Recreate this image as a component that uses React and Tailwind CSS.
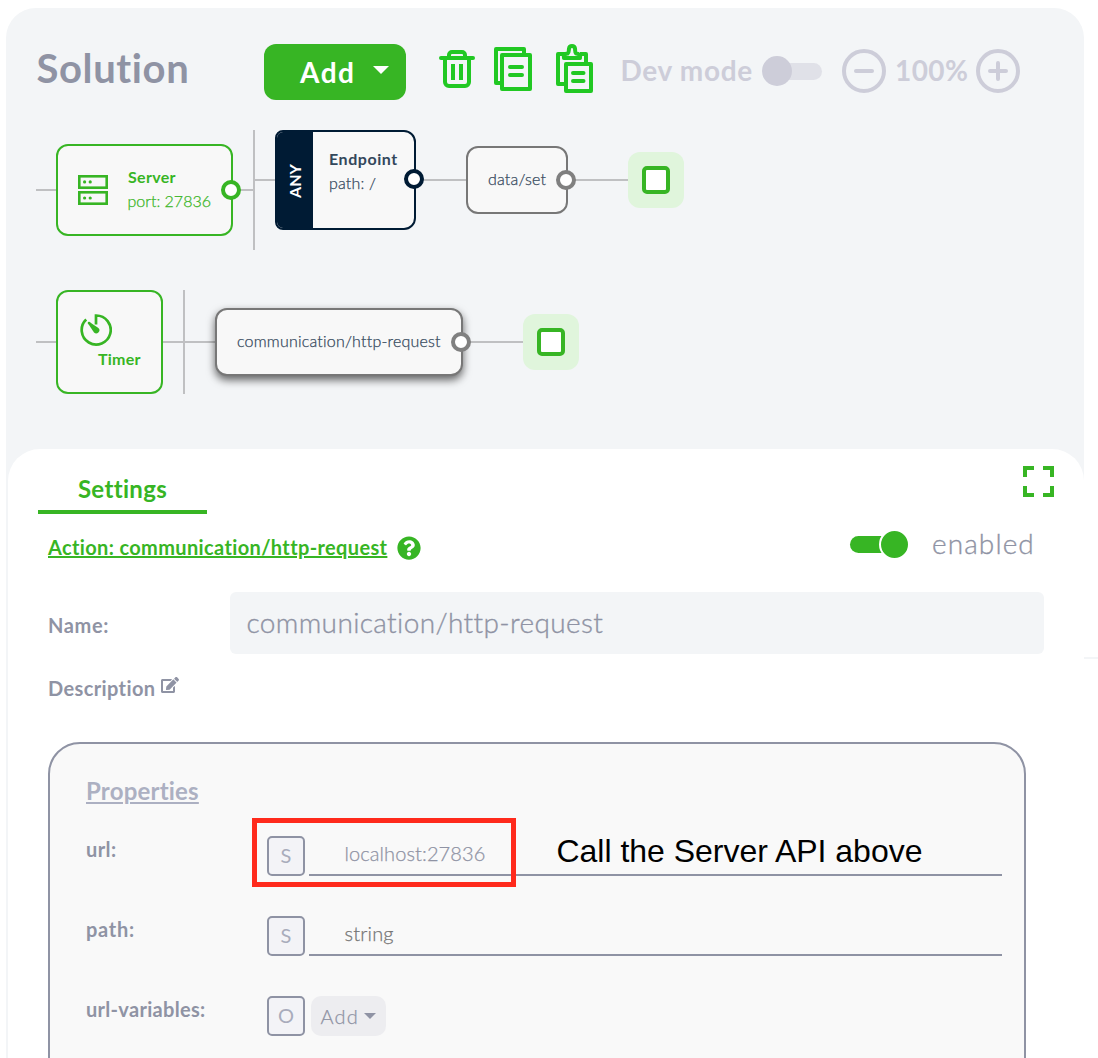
import { FaQuestionCircle, FaEdit } from "react-icons/fa";

function TrashIcon() {
  return (
    <svg className="ml-[31px] h-14 w-[40px]" viewBox="0 0 40 56" fill="none" stroke="#21c823" strokeWidth="4">
      <path d="M4 14h32" strokeLinecap="round" />
      <path d="M12 13V11a3 3 0 0 1 3-3h10a3 3 0 0 1 3 3v2" />
      <path d="M8 14v24a4 4 0 0 0 4 4h16a4 4 0 0 0 4-4V14" />
      <path d="M16 20v16M24 20v16" />
    </svg>
  );
}

function CopyIcon() {
  return (
    <svg className="ml-[16px] h-14 w-[40px]" viewBox="0 0 40 56" fill="none" stroke="#21c823" strokeWidth="4" strokeLinejoin="round">
      <path d="M31 11V5H3v34h6" />
      <path d="M9 11h28v34H9z" />
      <path d="M17 23h12M17 31h12" strokeLinecap="round" />
    </svg>
  );
}

function PasteIcon() {
  return (
    <svg className="ml-[22px] h-14 w-[40px]" viewBox="0 0 40 56" fill="none" stroke="#21c823" strokeWidth="4" strokeLinejoin="round">
      <path d="M10 10H3v30h7M25 10h6v10" />
      <path d="M9 14h16c.5-2.500-1-4.500-4-4.500C19.800 8.500 20.300 6 20 4.500c-.6-3.300-5.400-3.300-6 0-.3 1.500.2 4-1.300 5-3 0-4.200 2-3.700 4.500z" />
      <path d="M11 20h25v27H11z" />
      <path d="M18 29h10.500M18 37h10.500" strokeLinecap="round" />
    </svg>
  );
}

function ServerIcon() {
  return (
    <svg className="h-[30px] w-[30px]" viewBox="0 0 30 30" fill="none" stroke="#37b524" strokeWidth="2.600">
      <rect x="1.300" y="1.300" width="27.400" height="11.400" />
      <rect x="1.300" y="17.300" width="27.400" height="11.400" />
      <g fill="#37b524" stroke="none">
        <circle cx="6.600" cy="6.900" r="1.600" />
        <circle cx="12.200" cy="6.900" r="1.600" />
        <circle cx="6.600" cy="23" r="1.600" />
        <circle cx="12.200" cy="23" r="1.600" />
      </g>
    </svg>
  );
}

function TimerIcon() {
  return (
    <svg className="h-8 w-8" viewBox="0 0 32 32" fill="none" stroke="#37b524" strokeWidth="2.700">
      <path d="M6.200 5.500A14.500 14.500 0 1 0 16 1.500V10.500" />
      <path d="M9.500 8 18.400 14A2.900 2.900 0 1 1 14 18.400L8 9.500z" fill="#37b524" stroke="none" />
      <circle cx="9" cy="9" r="1.300" fill="#37b524" stroke="none" />
    </svg>
  );
}

function ExpandIcon() {
  return (
    <svg className="mt-[17px] mr-[30px] h-[31px] w-[31px]" viewBox="0 0 31 31" fill="none" stroke="#37b524" strokeWidth="4">
      <path d="M2 11V2h9M20 2h9v9M29 20v9h-9M11 29H2v-9" />
    </svg>
  );
}

function ZoomIcon({ plus, className }) {
  return (
    <svg className={`mt-[5px] h-11 w-11 shrink-0 ${className}`} viewBox="0 0 44 44" fill="none" stroke="#cdcdd9" strokeWidth="4" strokeLinecap="round">
      <circle cx="22" cy="22" r="20" />
      <path d={plus ? "M14 22h16M22 14v16" : "M14 22h16"} />
    </svg>
  );
}

function Toolbar() {
  return (
    <header className="flex h-[92px] items-start pt-9 pl-[30px]">
      <h1 className="w-[228px] pl-[0.500px] text-[40px] leading-[48px] font-bold tracking-[0.620px] text-[#8f93a4]">Solution</h1>
      <button className="flex h-14 w-[142px] rounded-[12px] bg-[#37b524] pl-[36px] text-[28px] leading-[56px] font-bold tracking-[1.500px] text-white">
        Add
        <svg className="mt-[22px] ml-[18px] h-2 w-4" viewBox="0 0 16 8" fill="#fff">
          <path d="M0 0h16L8 8z" />
        </svg>
      </button>
      <TrashIcon />
      <CopyIcon />
      <PasteIcon />
      <div className="ml-[25px] w-[142px] pl-[0.500px] text-[28px] leading-[52px] font-bold tracking-[0.680px] whitespace-nowrap text-[#cdcdd9]">Dev mode</div>
      <div className="mt-3 flex h-[30px] w-[60px] items-center">
        <div className="size-[30px] shrink-0 rounded-full bg-[#cdcdd9]" />
        <div className="-ml-[15px] h-[17px] w-[45px] rounded-r-full bg-[#cdcdd9]/50" />
      </div>
      <ZoomIcon className="ml-5" />
      <div className="ml-[9px] w-[81px] text-[28px] leading-[52px] font-bold tracking-[0.400px] text-[#cdcdd9]">100%</div>
      <ZoomIcon plus />
    </header>
  );
}

function Wire({ className }) {
  return <div className={`absolute bg-[#bfc0c2] ${className}`} />;
}

function Port({ className }) {
  return <div className={`absolute size-5 rounded-full border-4 bg-white ${className}`} />;
}

function AddSlot({ className }) {
  return (
    <div className={`absolute flex size-14 items-center justify-center rounded-[12px] bg-[#e0f5dc] ${className}`}>
      <div className="size-7 rounded-[5px] border-4 border-[#37b524] bg-white" />
    </div>
  );
}

function FlowCanvas() {
  return (
    <div className="relative h-[349px] text-[16px] leading-6">
      <Wire className="top-[89px] left-[30px] h-0.5 w-5" />
      <Wire className="top-[89px] left-[227px] h-0.5 w-5" />
      <Wire className="top-[30px] left-[247px] h-[120px] w-0.5" />
      <Wire className="top-[79px] left-[249px] h-0.5 w-5" />
      <Wire className="top-[79px] left-[410px] h-0.5 w-[50px]" />
      <Wire className="top-[79px] left-[562px] h-0.5 w-[60px]" />

      <div className="absolute top-[44px] left-[50px] flex h-[92px] w-[177px] rounded-[12px] border-2 border-[#37b524] bg-[#f8f8f8] text-[#37b524]">
        <div className="pt-[29px] pl-5"><ServerIcon /></div>
        <div className="pt-[19px] pl-[20px] whitespace-nowrap">
          <p className="font-bold tracking-[0.300px]">Server</p>
          <p className="-ml-[0.500px] font-light [-webkit-text-stroke:0.250px]">port: 27836</p>
        </div>
      </div>
      <Port className="top-[80px] left-[215px] border-[#37b524]" />

      <div className="absolute top-[30px] left-[269px] flex h-[100px] w-[141px] overflow-hidden rounded-[12px] rounded-l-[8px] border-2 border-[#001b34] bg-[#f8f8f8] text-[#33475b]">
        <div className="flex w-9 items-center justify-center bg-[#001b34] pt-0.5 text-white">
          <span className="-rotate-90 font-bold">ANY</span>
        </div>
        <div className="pt-[15px] pl-[16px] whitespace-nowrap">
          <p className="font-bold tracking-[0.560px]">Endpoint</p>
          <p className="font-light tracking-[0.180px] [-webkit-text-stroke:0.250px]">path: /</p>
        </div>
      </div>
      <Port className="top-[69px] left-[398px] border-[#001b34]" />

      <div className="absolute top-[46px] left-[460px] h-[68px] w-[102px] rounded-[12px] border-2 border-[#777] bg-[#f8f8f8] pt-[19px] pl-5 font-light tracking-[0.170px] text-[#33475b] [-webkit-text-stroke:0.250px]">data/set</div>
      <Port className="top-[70px] left-[550px] border-[#808080]" />
      <AddSlot className="top-[52px] left-[622px]" />

      <Wire className="top-[241px] left-[30px] h-0.5 w-5" />
      <Wire className="top-[241px] left-[157px] h-0.5 w-[53px]" />
      <Wire className="top-[190px] left-[177px] h-[104px] w-0.5" />
      <Wire className="top-[241px] left-[457px] h-0.5 w-[60px]" />

      <div className="absolute top-[190px] left-[50px] h-[104px] w-[107px] rounded-[12px] border-2 border-[#37b524] bg-[#f8f8f8] pt-[22px] pl-[22px] text-[#37b524]">
        <TimerIcon />
        <p className="mt-px ml-[18px] font-bold tracking-[0.240px]">Timer</p>
      </div>

      <div className="absolute top-[208px] left-[209px] h-[68px] w-[248px] rounded-[12px] border-2 border-[#777] bg-[#f8f8f8] pt-[19px] pl-5 font-light tracking-[0.210px] text-[#33475b] shadow-[0_4px_8px_rgba(0,0,0,0.600)] [-webkit-text-stroke:0.250px]">
        communication/http-request
      </div>
      <Port className="top-[232px] left-[445px] border-[#808080]" />
      <AddSlot className="top-[214px] left-[517px]" />
    </div>
  );
}

function TypeBadge({ children }) {
  return (
    <div className="mr-1 h-10 w-[38px] shrink-0 rounded-[5px] border-2 border-[#8f93a4] bg-[#f3f3f7] text-center leading-[34px] text-[#a9acbc]">
      {children}
    </div>
  );
}

function PropertyRow({ label, labelClass, type, children }) {
  return (
    <div className="flex h-20">
      <div className={`w-[181px] leading-[67px] font-bold text-[#8f93a4] ${labelClass}`}>{label}</div>
      <div className="flex flex-1 pt-5">
        <TypeBadge>{type}</TypeBadge>
        {children}
      </div>
    </div>
  );
}

function PropertiesCard() {
  return (
    <section className="ml-10 h-[400px] w-[978px] rounded-[32px] border-2 border-[#8f93a4] bg-[#f9f9f9] pt-5 pr-[22px] pl-9 text-[20px]">
      <h3 className="h-[52px] text-[24px] leading-[54px] font-bold tracking-[0.200px] text-[#acb0c2] underline decoration-2 underline-offset-2">Properties</h3>
      <div className="relative">
        <PropertyRow label="url:" labelClass="tracking-[0.430px]" type="S">
          <div className="h-10 flex-1 border-b-2 border-[#8f93a4] pl-[35.500px] leading-[35px] font-light tracking-[0.100px] text-[#8f93a4] [-webkit-text-stroke:0.250px]">localhost:27836</div>
        </PropertyRow>
        <div className="absolute top-[2px] left-[166px] h-[69px] w-[264px] border-[5px] border-[#ff2a1c]" />
        <p className="absolute top-[17px] left-[470.500px] font-['Liberation_Sans',sans-serif] text-[32px] leading-[36px] tracking-[-0.020px] whitespace-nowrap text-black">Call the Server API above</p>
      </div>
      <PropertyRow label="path:" labelClass="tracking-[0.730px]" type="S">
        <div className="h-10 flex-1 border-b-2 border-[#8f93a4] pl-[35.500px] leading-[35px] font-light tracking-[0.200px] text-[#757575] [-webkit-text-stroke:0.250px]">string</div>
      </PropertyRow>
      <PropertyRow label="url-variables:" labelClass="tracking-[0.300px]" type="O">
        <button className="ml-0.5 flex h-10 w-[75px] rounded-[10px] bg-[#ededf0] pl-[9.500px] leading-10 font-light tracking-[1.200px] text-[#8f93a4] [-webkit-text-stroke:0.250px]">
          Add
          <svg className="mt-[17px] ml-[5px] h-1.5 w-3" viewBox="0 0 12 6" fill="#8f93a4">
            <path d="M0 0h12L6 6z" />
          </svg>
        </button>
      </PropertyRow>
    </section>
  );
}

function SettingsPanel() {
  return (
    <section className="ml-0.5 h-[609px] rounded-t-[32px] bg-white text-[20px]">
      <div className="flex h-[65px] justify-between">
        <div className="ml-[30px] h-[65px] w-[169px] border-b-4 border-[#37b524] pt-5 text-center text-[24px] leading-[40px] font-bold tracking-[0.330px] text-[#37b524]">Settings</div>
        <ExpandIcon />
      </div>
      <div className="flex h-[78px] items-start pl-10">
        <a className="w-[349px] text-[20px] leading-[67px] font-bold tracking-[0.360px] whitespace-nowrap text-[#37b524] underline decoration-2 underline-offset-1">Action: communication/http-request</a>
        <FaQuestionCircle className="mt-[22px] size-6 text-[#37b524]" />
        <div className="mt-[15px] ml-[429px] flex h-[31px] w-[60px] items-center">
          <div className="h-[17px] w-[38px] shrink-0 rounded-l-full bg-[#37b524]" />
          <div className="-ml-[9px] size-[31px] shrink-0 rounded-full border-2 border-white bg-[#37b524]" />
        </div>
        <div className="ml-[22px] text-[28px] leading-[59px] font-light tracking-[1.100px] text-[#8f93a4] [-webkit-text-stroke:0.350px]">enabled</div>
      </div>
      <div className="flex h-[62px] pl-10">
        <div className="w-[182px] leading-[67px] font-bold tracking-[0.650px] text-[#8f93a4]">Name:</div>
        <div className="h-[62px] w-[814px] rounded-[6px] bg-[#f3f5f7] pl-[16.500px] text-[28px] leading-[60px] font-light tracking-[0.370px] text-[#8f93a4] [-webkit-text-stroke:0.350px]">communication/http-request</div>
      </div>
      <div className="flex h-[88px] pl-10 text-[#8f93a4]">
        <div className="leading-[68px] font-bold tracking-[0.380px]">Description</div>
        <FaEdit className="mt-[23px] ml-[6px] h-4 w-[18px]" />
      </div>
      <PropertiesCard />
    </section>
  );
}

export default function App() {
  return (
    <div className="flex h-[1058px] w-[1098px] overflow-hidden bg-white pt-2 pl-1.5 font-['Lato',sans-serif]">
      <main className="w-[1078px] shrink-0 overflow-hidden rounded-t-[30px] bg-[#f3f5f7]">
        <Toolbar />
        <FlowCanvas />
        <SettingsPanel />
      </main>
      <div className="h-[651px] flex-1 border-b-2 border-[#f3f5f7]" />
    </div>
  );
}
